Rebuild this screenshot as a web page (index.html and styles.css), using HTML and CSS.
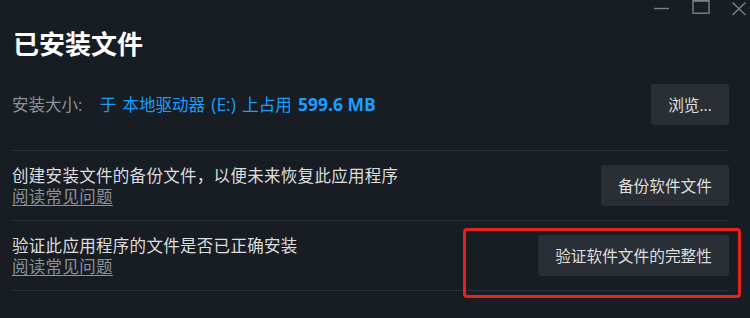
FILE: index.html
```html
<!DOCTYPE html>
<html lang="zh-CN">
<head>
<meta charset="utf-8">
<title>已安装文件</title>
<link rel="stylesheet" href="styles.css">
</head>
<body>
<div class="window">
  <div class="titlebar">
    <span class="ctl ctl-min"><svg width="17" height="14" viewBox="0 0 17 14"><path d="M1 8.5H16" stroke="#7b828b" stroke-width="1.4"/></svg></span>
    <span class="ctl ctl-max"><svg width="18" height="15" viewBox="0 0 18 15"><rect x="1" y="1.2" width="16" height="13" fill="none" stroke="#7b828b" stroke-width="1.4"/><path d="M1 1.5H17" stroke="#7b828b" stroke-width="2.6"/></svg></span>
    <span class="ctl ctl-close"><svg width="16" height="15" viewBox="0 0 16 15"><path d="M1.5 1.5L14.5 14M14.5 1.5L1.5 14" stroke="#7b828b" stroke-width="1.4"/></svg></span>
  </div>
  <h1 class="title">已安装文件</h1>
  <div class="row row-size">
    <div class="size-text">
      <span class="label">安装大小:</span>
      <span class="value">于 本地驱动器 <span class="lat">(E:)</span> 上占用 <b class="lat">599.6 MB</b></span>
    </div>
    <button class="btn btn-browse">浏览...</button>
  </div>
  <div class="row row-action">
    <div class="desc">
      <div class="desc-main">创建安装文件的备份文件，以便未来恢复此应用程序</div>
      <a class="faq" href="#">阅读常见问题</a>
    </div>
    <button class="btn">备份软件文件</button>
  </div>
  <div class="row row-action">
    <div class="desc">
      <div class="desc-main">验证此应用程序的文件是否已正确安装</div>
      <a class="faq" href="#">阅读常见问题</a>
    </div>
    <div class="highlight-wrap">
      <button class="btn">验证软件文件的完整性</button>
      <span class="highlight"></span>
    </div>
  </div>
</div>
</body>
</html>
```
FILE: styles.css
```css
html, body {
  margin: 0;
  padding: 0;
  background: #181c23;
}
body {
  width: 750px;
  height: 318px;
  overflow: hidden;
  font-family: "Open Sans", "Noto Sans CJK SC", sans-serif;
  color: #dcdedf;
}
.window {
  padding: 0 21px 0 12px;
}
.titlebar {
  display: flex;
  justify-content: flex-end;
  height: 16px;
  margin-right: -18px;
}
.ctl {
  display: block;
  height: 16px;
}
.ctl svg { display: block; }
.ctl-min { margin-right: 22px; }
.ctl-max { margin-right: 21px; margin-top: -1px; }
.ctl-close { margin-top: 1px; }
.title {
  margin: 12px 0 0 1px;
  font-size: 26px;
  line-height: 32px;
  font-weight: 700;
  color: #ffffff;
}
.row {
  display: flex;
  align-items: center;
  justify-content: space-between;
}
.row-size {
  margin-top: 24px;
  padding-bottom: 25px;
  border-bottom: 1px solid #2c3038;
}
.size-text {
  font-size: 16.5px;
  line-height: 22px;
}
.label {
  color: #8b929a;
  margin-right: 13px;
}
.value {
  color: #1a9fff;
  word-spacing: 2px;
}
.lat {
  font-size: 17.5px;
  word-spacing: 0;
}
.value b {
  font-weight: 700;
}
.row-action {
  height: 69px;
  border-bottom: 1px solid #2c3038;
}
.desc {
  display: flex;
  flex-direction: column;
  padding-top: 1px;
}
.desc-main {
  font-size: 16.5px;
  line-height: 22px;
  letter-spacing: 0.3px;
  color: #dcdedf;
}
.faq {
  font-size: 16.5px;
  line-height: 20px;
  letter-spacing: 0.3px;
  color: #8b929a;
  text-decoration: underline;
  text-underline-offset: 2px;
  align-self: flex-start;
}
.btn {
  font-family: "Open Sans", "Noto Sans CJK SC", sans-serif;
  font-size: 15.7px;
  color: #dcdedf;
  background: #2a2e35;
  border: none;
  border-radius: 3px;
  height: 41px;
  padding: 0 17px;
  cursor: pointer;
}
.btn-browse {
  width: 78px;
  padding: 0;
}
.highlight-wrap {
  position: relative;
  display: flex;
}
.highlight {
  position: absolute;
  left: -75px;
  right: -12px;
  top: -7px;
  bottom: -22px;
  border: 3px solid #e4231d;
  border-radius: 4px;
  pointer-events: none;
}
```
